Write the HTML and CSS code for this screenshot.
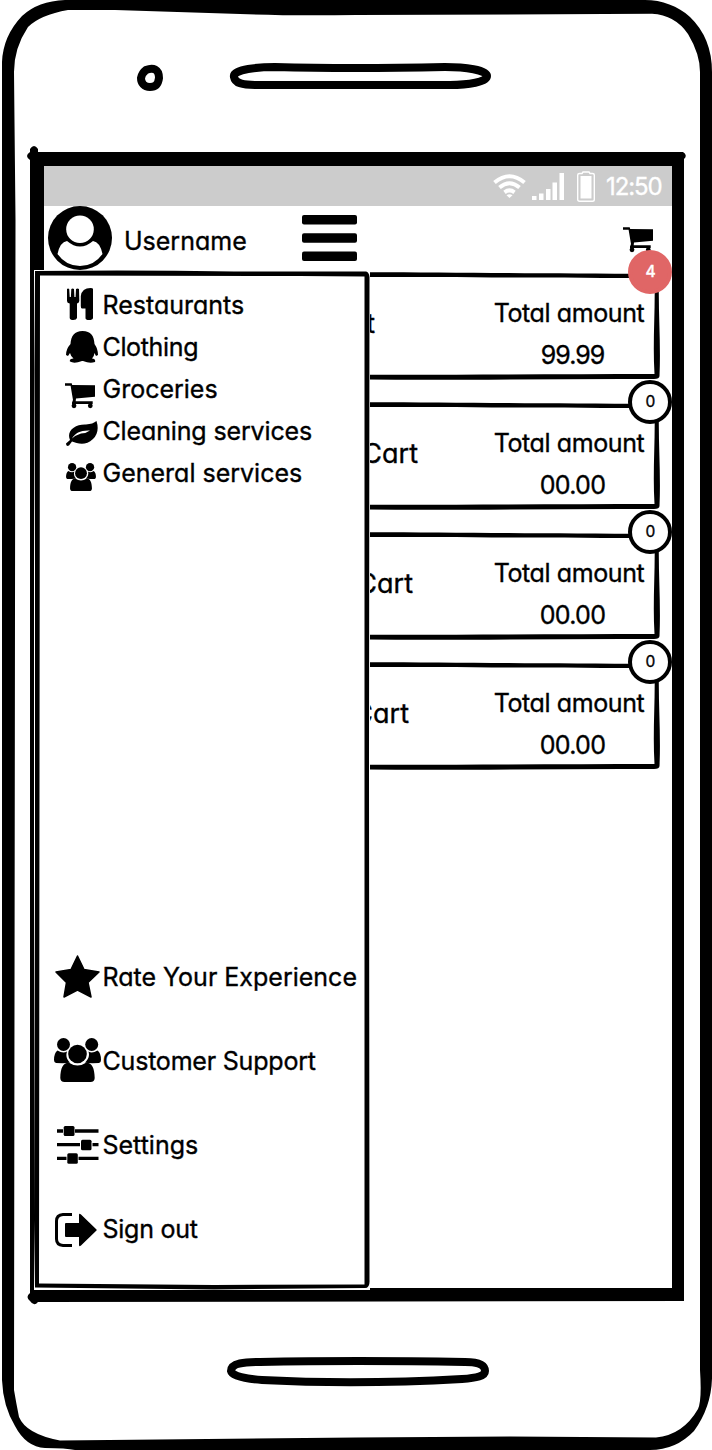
FILE: index.html
```html
<!DOCTYPE html>
<html lang="en">
<head>
<meta charset="utf-8">
<title>Carts</title>
<link rel="stylesheet" href="styles.css">
</head>
<body>
<svg class="defs" width="0" height="0">
  <symbol id="cart" viewBox="0 0 30 26">
    <path d="M0 .3h6.700l.5 1.700 22.800.2v11.500L11 15.500l-.3 2.700h17V21H7V19.500L8 17 5.600 2.800H0z"/><circle cx="9" cy="22.800" r="2.400"/><circle cx="25.300" cy="22.800" r="2.400"/>
  </symbol>
  <symbol id="group" viewBox="0 0 47 44">
    <circle cx="9.500" cy="6.500" r="6.500"/><circle cx="37.700" cy="6.500" r="6.500"/>
    <path d="M3.500 12.500Q9 16 13 13.500C11.500 18 13 22 16 24.500Q13 25.500 2 25Q0 24.500 0 22Q0 15 3.500 12.500zM43.500 12.500Q38 16 34.500 13.500C36 18 34 22 31 24.500Q34 25.500 45 25Q47 24.500 47 22Q47 15 43.500 12.500z"/>
    <circle cx="23.500" cy="16" r="9.300"/>
    <path d="M14.500 24.500Q23.500 30.500 32.500 24.500C38 25 40.500 30 40.700 40Q40.500 44 36.500 44H10.500Q6.500 44 6.300 40C6.500 30 9 25 14.500 24.500z"/>
  </symbol>
  <symbol id="card" viewBox="0 0 292 112">
    <path d="M0 .2C90 .3 170 1.500 287 1.800Q290 2 291 6C290 40 293 70 291.500 104Q291.500 107 286 107C190 106.500 90 108.500 0 107.500V102.700C90 103 190 102 286.500 102C284.500 70 287.500 40 286.500 6C200 6 90 5 0 5z"/>
  </symbol>
</svg>
<div class="phone">
  <svg class="frame" viewBox="0 0 712 1450">
    <path fill-rule="evenodd" d="M65 0H645C662 0 678 6 690 17Q712 38 712 72V1372Q713 1405 694 1431Q676 1450 650 1450H75Q66 1448 45 1448Q26 1447 15 1426Q3 1406 2 1380V62Q3 36 22 16Q38 1 65 0zM68 10Q40 15 28 27Q14 48 14 72Q15 170 15.500 220L14 1390Q16 1402 19 1417Q26 1434 60 1440.500L356 1437.500L510 1436.500L656 1437.500Q683 1435 698 1409Q702 1400 700 1370V72Q700 54 688 34Q675 15 652 13.800L356 15Q290 16 240 14L115 10z"/>
    <path fill-rule="evenodd" d="M30 149Q34 143 38 149V152H683Q688 155 684 159V1301L38 1302Q34 1307 30 1301Q25 1297 30 1293V160Q24 156 30 152zM44 166V1288H672V166z"/>
    <g fill="none" stroke="#000" stroke-width="8">
      <path d="M146 70C153 67 159 69 159 78C158 86 154 87 150 87C144 87 141 83 141 78Q142 73 146 70z"/>
      <path d="M234 77C232 69 260 67 275 67Q350 69 445 67C465 67 487 70 487 76C487 82 468 85 450 85H255C242 85 235 83 234 77z"/>
      <path d="M231 1371C231 1363 245 1362 260 1362Q355 1360 465 1362C478 1362 485 1365 485 1371C485 1376 477 1378 462 1379Q357 1385 262 1380C247 1379 232 1376 231 1371z"/>
    </g>
  </svg>
  <div class="screen">
    <div class="status">
      <svg class="wifi" viewBox="0 0 33 24"><g fill="none" stroke="#fff" stroke-width="4"><path d="M1.500 8.500Q16.500-4 31.500 8.500"/><path d="M6.500 13.500Q16.500 5 26.500 13.500"/><path d="M11.500 18.300Q16.500 14.500 21.500 18.300"/></g><path fill="#fff" d="M13.500 21.300Q16.500 19 19.500 21.300L16.500 24z"/></svg>
      <svg class="signal" viewBox="0 0 32 27" fill="#fff"><path d="M0 23h4.500v4H0zM7 20.500h4.500V27H7zM14 16h4.500v11H14zM20.500 9.500H25V27h-4.500zM27.500 0H32v27h-4.500z"/></svg>
      <svg class="battery" viewBox="0 0 18 31"><path d="M2.500 2.500H5L6 1h6L13 2.500h2.500Q17.300 2.500 17.300 4V28.500Q17.300 30.300 15.500 30.300H2.500Q.7 30.300 .7 28.500V4Q.7 2.500 2.500 2.500z" fill="none" stroke="#fff" stroke-width="1.400"/><path d="M3.500 5h11v22.500h-11z" fill="#fff"/></svg>
      <span class="clock">12:50</span>
    </div>
    <header class="header">
      <svg class="avatar" viewBox="0 0 64 64"><circle cx="32" cy="32" r="32"/><g fill="#fff"><circle cx="32" cy="23.200" r="13.800"/><path d="M19 35Q32 46 45 35Q52 36 54.500 48Q46 60 32 60Q18 60 9.500 48Q12 36 19 35z"/></g></svg>
      <span class="username">Username</span>
      <svg class="menu" viewBox="0 0 55 46"><rect width="55" height="9.500" rx="2"/><rect y="18.300" width="55" height="9.500" rx="2"/><rect y="36.500" width="55" height="9.500" rx="2"/></svg>
      <svg class="headcart"><use href="#cart"/></svg>
    </header>
    <main class="carts">
      <section class="card"><svg class="outline"><use href="#card"/></svg><span class="name n1">Cart</span><div class="total"><span class="caption">Total amount</span><span class="amount nines">99.99</span></div><span class="badge hot">4</span></section>
      <section class="card"><svg class="outline"><use href="#card"/></svg><span class="name n2">Cart</span><div class="total"><span class="caption">Total amount</span><span class="amount">00.00</span></div><span class="badge">0</span></section>
      <section class="card"><svg class="outline"><use href="#card"/></svg><span class="name n3">Cart</span><div class="total"><span class="caption">Total amount</span><span class="amount">00.00</span></div><span class="badge">0</span></section>
      <section class="card"><svg class="outline"><use href="#card"/></svg><span class="name n4">Cart</span><div class="total"><span class="caption">Total amount</span><span class="amount">00.00</span></div><span class="badge">0</span></section>
    </main>
  </div>
  <nav class="drawer">
    <svg class="edge" viewBox="0 0 336 1020"><path fill-rule="evenodd" d="M1 1Q100 -.2 200 1.500L332 1.500Q335 2 335.500 7L335 500L335.500 1010Q336 1018 331 1018L180 1019.500L1 1017.500L0 950L1 600V300L.4 100zM6 5.500L5.500 500L5 1013.500L180 1015L330.500 1014.500V500V6.500L265 6z"/></svg>
    <ul class="categories">
      <li><span class="icon"><svg class="i-food" viewBox="0 0 26 32"><path d="M0 1Q1 0 2.200 1L2.700 9H3.900L4.300 1Q5.700 0 7 1L7.400 9H8.600L9 1Q10.500 0 12 1L12.300 13Q12 15 10 15.500V30Q9.500 32 6.300 32Q3 32 2.700 30V15.500Q0 15 0 13zM26 1V30Q25.500 32 22 32Q18.500 32 18.500 30V20.500H15Q13.800 20.500 13.800 18V8Q15 0 23.500 0Q26 0 26 1z"/></svg></span><span class="l-rest">Restaurants</span></li>
      <li><span class="icon"><svg class="i-penguin" viewBox="0 0 32 32"><path d="M16.500 0C25 0 28 5 28.500 13Q32 18 32 24L30 25L28.500 22Q28 26 26 27.500Q30 28 29 31Q24 33 17 30H16Q8 33 4 30.500Q3 28 7.500 27.500Q5 26 4 22L2 25L0 24Q0 18 4.500 13C5 5 8.500 0 16.500 0z"/></svg></span><span class="l-cloth">Clothing</span></li>
      <li><span class="icon"><svg class="i-cart"><use href="#cart"/></svg></span><span class="l-groc">Groceries</span></li>
      <li><span class="icon"><svg class="i-leaf" viewBox="0 0 32 25"><path fill-rule="evenodd" d="M30.500 0Q34 11 27 18C20 25 12 23 6 20.500L3 24.500Q0 26 0 22.500L4 19C0 10 9 3 20 3.500Q27 3 30.500 0zM24 9.500C15 9 9 12 6 17.500Q10 14 15 12.500Q20 12.500 24 9.500z"/></svg></span><span class="l-clean">Cleaning services</span></li>
      <li><span class="icon"><svg class="i-group"><use href="#group"/></svg></span><span class="l-gen">General services</span></li>
    </ul>
    <ul class="actions">
      <li><span class="icon"><svg class="i-star" viewBox="0 0 45 43"><path stroke="#000" stroke-width="1.500" stroke-linejoin="round" d="M22.500 1L29 14.500L44 17L33 27.500L36 42L22.500 35L9 42L11.500 27.500L1 17L16 14.500z"/></svg></span><span class="l-rate">Rate Your Experience</span></li>
      <li><span class="icon"><svg class="i-support"><use href="#group"/></svg></span><span class="l-supp">Customer Support</span></li>
      <li><span class="icon"><svg class="i-settings" viewBox="0 0 42 38"><path d="M0 3.300h6v3.400H0zM18 3.300h23.500v3.400H18zM0 16.900h23v3.400H0zM35.500 16.900h6v3.400h-6zM0 30.700h9.500v3.400H0zM21.500 30.700h20v3.400h-20z"/><rect x="6.700" y="0" width="10.800" height="10" rx="1.500"/><rect x="24" y="13.700" width="10.500" height="10.500" rx="1.500"/><rect x="10.300" y="27.300" width="10.500" height="10.500" rx="1.500"/></svg></span><span class="l-set">Settings</span></li>
      <li><span class="icon"><svg class="i-out" viewBox="0 0 42 34"><path d="M17 1.500H8Q1.500 2 1.500 8V26Q1.500 32 8 32.500H17" fill="none" stroke="#000" stroke-width="3"/><path d="M11 10H24V2Q24 0 26 1.500L41.500 16.500Q42 17 41.500 17.500L26 32.500Q24 34 24 32V24H11Q10 24 10 23V11Q10 10 11 10z"/></svg></span><span class="l-out">Sign out</span></li>
    </ul>
  </nav>
</div>
</body>
</html>
```
FILE: styles.css
```css
* { box-sizing: border-box; }
body {
  margin: 0;
  background: #fff;
  color: #000;
  font: 25px/42px Inter, "Liberation Sans", sans-serif;
  font-feature-settings: "cv11";
  -webkit-text-stroke: .35px currentColor;
}
svg { display: block; flex: none; }
.defs { position: absolute; }
span { white-space: nowrap; }
.phone {
  position: relative;
  width: 712px;
  height: 1450px;
  overflow: hidden;
  padding: 166px 40px 0 44px;
}
.frame { position: absolute; inset: 0; width: 712px; height: 1450px; }
.screen { position: relative; height: 1122px; }

.status {
  display: flex;
  height: 40px;
  padding: 0 10px 0 449px;
  background: #ccc;
  color: #fff;
}
.wifi { width: 33px; height: 24px; margin-top: 8px; }
.signal { width: 32px; height: 27px; margin: 7px 0 0 6px; }
.battery { width: 18px; height: 31px; margin: 5px 0 0 13px; }
.clock { margin-left: 11px; font-size: 24px; line-height: 41px; letter-spacing: -1.1px; }

.header { display: flex; height: 66px; padding-left: 4px; }
.avatar { width: 64px; height: 64px; }
.username { width: 189px; flex: none; margin-top: 14px; padding-left: 12px; }
.menu { width: 55px; height: 46px; margin: 9px 0 0 1px; }
.headcart { width: 30px; height: 26px; margin: 21px 0 0 266px; }

.carts { display: flex; flex-direction: column; gap: 18px; padding-left: 324px; }
.card { position: relative; display: flex; height: 112px; padding-right: 9px; }
.outline { position: absolute; left: 0; top: 0; width: 292px; height: 112px; }
.name { width: 50px; margin-top: 31px; font-size: 27px; display: flex; justify-content: flex-end; }
.n1 { width: 7px; }
.n3 { width: 45px; }
.n4 { width: 41px; }
.total { margin: 20px 0 0 auto; width: 188px; display: flex; flex-direction: column; align-items: center; }
.caption { letter-spacing: -.4px; }
.amount { margin-left: 7px; letter-spacing: -.7px; }
.nines { letter-spacing: -1px; }
.badge {
  position: absolute;
  left: 260px;
  top: -22px;
  width: 44px;
  height: 44px;
  border: 4px solid #000;
  border-radius: 50%;
  background: #fff;
  font-size: 15.500px;
  line-height: 35px;
  text-align: center;
  padding-left: 1px;
}
.hot { border-color: #e06666; background: #e06666; color: #fff; font-weight: 500; }

.drawer {
  position: absolute;
  left: 34px;
  top: 270px;
  width: 336px;
  height: 1020px;
  padding-top: 14px;
  background: #fff;
}
.edge { position: absolute; left: 0; top: 0; width: 336px; height: 1020px; }
.drawer ul { margin: 0; padding: 0 0 0 19px; list-style: none; }
.drawer li { display: flex; height: 42px; }
.drawer .icon { display: flex; width: 49.500px; flex: none; }
.drawer .actions { padding-top: 462px; }
.drawer .actions li { height: 84px; }
.l-cloth { letter-spacing: -.35px; }
.l-clean { letter-spacing: -.14px; }
.l-supp { letter-spacing: -.2px; }
.l-out { letter-spacing: -.25px; }
.i-food { width: 26px; height: 32px; margin: 4px 0 0 14px; }
.i-penguin { width: 32px; height: 32px; margin: 5px 0 0 13px; }
.i-cart { width: 30px; height: 26px; margin: 15px 0 0 12px; }
.i-leaf { width: 32px; height: 25px; margin: 11px 0 0 13px; }
.i-group { width: 30px; height: 28px; margin: 11px 0 0 13px; }
.i-star { width: 45px; height: 43px; margin: -1px 0 0 2px; }
.i-support { width: 47px; height: 44px; margin: -2px 0 0 1px; }
.i-settings { width: 42px; height: 38px; margin: 2px 0 0 4px; }
.i-out { width: 42px; height: 34px; margin: 5px 0 0 2px; }
```
